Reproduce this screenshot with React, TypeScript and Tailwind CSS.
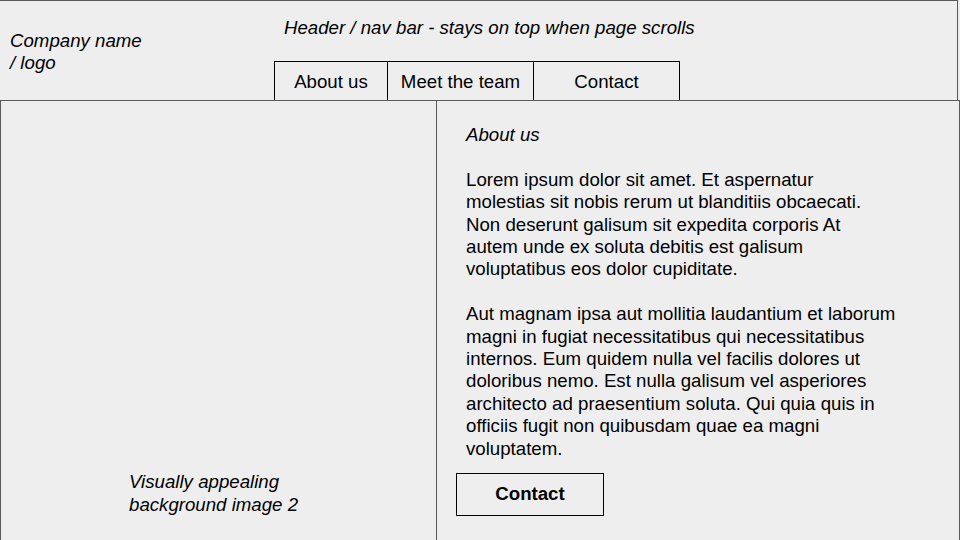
import React from "react";

const font = { fontFamily: '"Liberation Sans", Arial, sans-serif' };

export default function App() {
  return (
    <div className="w-[960px] h-[540px] bg-[#eeeeee] text-black overflow-hidden text-[18.67px] leading-[22.4px]" style={font}>
      <header className="h-[100px] w-[958px] border-t border-r border-[#595959] flex">
        <div className="w-[274px] shrink-0 pl-[10px] pt-[29px] italic">
          <div>Company name</div>
          <div>/ logo</div>
        </div>
        <div className="flex flex-col items-start">
          <div className="pl-[10px] pt-[16px] italic whitespace-nowrap">
            Header / nav bar - stays on top when page scrolls
          </div>
          <nav className="mt-auto flex w-[406px] h-[39px] border-t border-l border-r border-black">
            <div className="w-[113px] shrink-0 flex items-center justify-center border-r border-black pt-[2px]">About us</div>
            <div className="w-[146px] shrink-0 flex items-center justify-center border-r border-black pt-[2px]">Meet the team</div>
            <div className="flex-1 flex items-center justify-center pt-[2px]">Contact</div>
          </nav>
        </div>
      </header>
      <main className="flex h-[440px] border-t border-r border-[#595959]">
        <section className="w-[437px] shrink-0 border-l border-r border-[#595959] flex flex-col justify-end pl-[128px] pb-[24px] italic">
          <div>Visually appealing</div>
          <div>background image 2</div>
        </section>
        <section className="flex-1 flex flex-col pl-[29px] pt-[23px]">
          <div className="italic">About us</div>
          <div className="h-[22.4px]" />
          <div>
            <div>Lorem ipsum dolor sit amet. Et aspernatur</div>
            <div>molestias sit nobis rerum ut blanditiis obcaecati.</div>
            <div>Non deserunt galisum sit expedita corporis At</div>
            <div>autem unde ex soluta debitis est galisum</div>
            <div>voluptatibus eos dolor cupiditate.</div>
          </div>
          <div className="h-[22.4px]" />
          <div>
            <div>Aut magnam ipsa aut mollitia laudantium et laborum</div>
            <div>magni in fugiat necessitatibus qui necessitatibus</div>
            <div>internos. Eum quidem nulla vel facilis dolores ut</div>
            <div>doloribus nemo. Est nulla galisum vel asperiores</div>
            <div>architecto ad praesentium soluta. Qui quia quis in</div>
            <div>officiis fugit non quibusdam quae ea magni</div>
            <div>voluptatem.</div>
          </div>
          <button className="mt-[13px] -ml-[10px] w-[148px] h-[43px] border border-black font-bold flex items-center justify-center">
            Contact
          </button>
        </section>
      </main>
    </div>
  );
}
